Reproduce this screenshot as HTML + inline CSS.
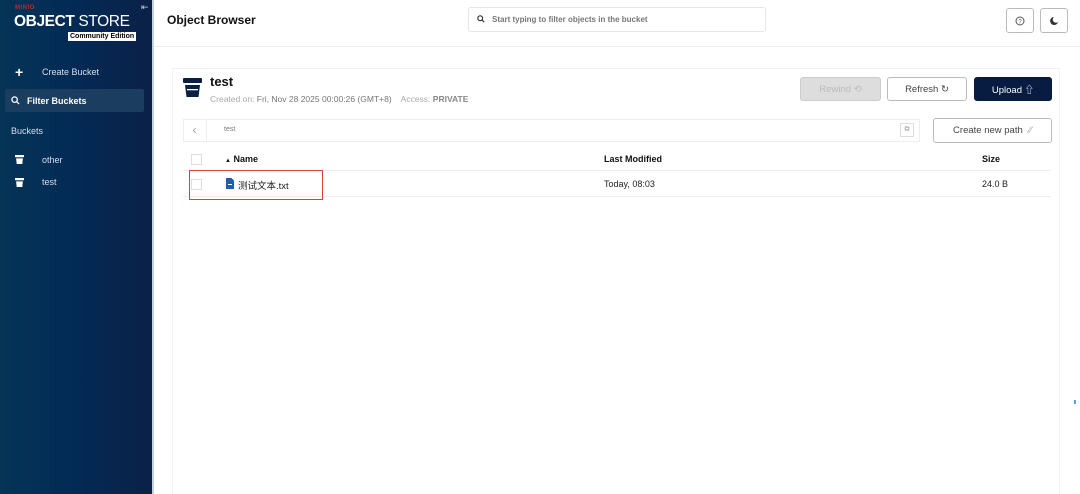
<!DOCTYPE html>
<html><head><meta charset="utf-8"><style>
*{box-sizing:border-box;margin:0;padding:0}
body{width:1080px;height:494px;overflow:hidden;font-family:"Liberation Sans","Noto Sans CJK SC",sans-serif;background:#fff;position:relative;color:#111}
.sb{position:absolute;left:0;top:0;width:154px;height:494px;background:linear-gradient(90deg,#053456 0%,#022a55 50%,#0b2147 100%);border-right:2px solid #c8d3e0;color:#fff}
.main{position:absolute;left:154px;top:0;right:0;bottom:0}
.btn{position:absolute;border:1px solid #bbb;border-radius:3px;font-size:9.5px;display:flex;align-items:center;justify-content:center;gap:6px;background:#fff;color:#444}
</style></head><body>
<div class="sb">
 <div style="position:absolute;left:15px;top:5px;font-size:6px;color:#c1272d;font-weight:bold;letter-spacing:.5px">MINIO</div>
 <div style="position:absolute;left:141px;top:2px;font-size:9px;color:#ccc">⇤</div>
 <div style="position:absolute;left:14px;top:13px;font-size:15.5px;letter-spacing:-.4px"><b>OBJECT</b> STORE</div>
 <div style="position:absolute;left:68px;top:32px;background:#fff;color:#000;font-size:7px;font-weight:bold;padding:0 2px;line-height:9px">Community Edition</div>
 <div style="position:absolute;left:15px;top:64px;font-size:14px;font-weight:bold">+</div>
 <div style="position:absolute;left:42px;top:67px;font-size:9px;color:#dde">Create Bucket</div>
 <div style="position:absolute;left:5px;top:89px;width:139px;height:23px;background:#1a3d60;border-radius:2px"></div>
 <svg style="position:absolute;left:11px;top:96px" width="9" height="9" viewBox="0 0 10 10"><circle cx="4" cy="4" r="3" fill="none" stroke="#fff" stroke-width="1.4"/><path d="M6.5 6.5L9 9" stroke="#fff" stroke-width="1.4"/></svg>
 <div style="position:absolute;left:27px;top:96px;font-size:9px;font-weight:bold">Filter Buckets</div>
 <div style="position:absolute;left:11px;top:126px;font-size:9px;color:#dde">Buckets</div>
 <svg style="position:absolute;left:15px;top:155px" width="9" height="9" viewBox="0 0 8 8"><path d="M0 0h8v2H0zM1 3h6l-.5 5h-5z" fill="#fff"/></svg>
 <div style="position:absolute;left:42px;top:155px;font-size:9px;color:#dde">other</div>
 <svg style="position:absolute;left:15px;top:178px" width="9" height="9" viewBox="0 0 8 8"><path d="M0 0h8v2H0zM1 3h6l-.5 5h-5z" fill="#fff"/></svg>
 <div style="position:absolute;left:42px;top:177px;font-size:9px;color:#dde">test</div>
</div>
<div class="main">
 <div style="position:absolute;left:13px;top:13px;font-size:12px;font-weight:bold">Object Browser</div>
 <div style="position:absolute;left:314px;top:7px;width:298px;height:25px;border:1px solid #e6e6e6;border-radius:3px"></div>
 <svg style="position:absolute;left:323px;top:15px" width="8" height="8" viewBox="0 0 10 10"><circle cx="4" cy="4" r="3" fill="none" stroke="#333" stroke-width="1.5"/><path d="M6.5 6.5L9 9" stroke="#333" stroke-width="1.5"/></svg>
 <div style="position:absolute;left:338px;top:15px;font-size:8px;color:#777;font-weight:bold">Start typing to filter objects in the bucket</div>
 <div class="btn" style="left:852px;top:8px;width:28px;height:25px"><svg width="10" height="10" viewBox="0 0 10 10"><circle cx="5" cy="5" r="4" fill="none" stroke="#555" stroke-width="1"/><text x="5" y="7.5" font-size="6" text-anchor="middle" fill="#555" font-family="Liberation Sans">?</text></svg></div>
 <div class="btn" style="left:886px;top:8px;width:28px;height:25px"><svg width="10" height="10" viewBox="0 0 10 10"><path d="M5 1a4 4 0 1 0 4 5 3 3 0 0 1-4-5z" fill="#333"/></svg></div>
 <div style="position:absolute;left:0;right:0;top:46px;border-top:1px solid #eee"></div>
 <div style="position:absolute;left:18px;top:68px;width:888px;height:426px;border:1px solid #f2f2f2;border-bottom:none"></div>
 <svg style="position:absolute;left:29px;top:78px" width="19" height="19" viewBox="0 0 19 19"><rect x="0" y="0" width="19" height="5" rx="1" fill="#0a1f44"/><path d="M2 7h15l-1.5 12h-12z" fill="#0a1f44"/><rect x="4" y="11" width="11" height="1.3" fill="#fff"/></svg>
 <div style="position:absolute;left:56px;top:74px;font-size:13px;font-weight:bold">test</div>
 <div style="position:absolute;left:56px;top:94px;font-size:8.5px;color:#aaa">Created on: <span style="color:#777">Fri, Nov 28 2025 00:00:26 (GMT+8)</span> &nbsp;&nbsp; Access: <span style="color:#888;font-weight:bold">PRIVATE</span></div>
 <div class="btn" style="left:646px;top:77px;width:81px;height:24px;background:#ddd;border-color:#ccc;color:#bbb">Rewind ⟲</div>
 <div class="btn" style="left:733px;top:77px;width:80px;height:24px">Refresh ↻</div>
 <div class="btn" style="left:820px;top:77px;width:78px;height:24px;background:#081c42;border-color:#081c42;color:#fff">Upload ⇧</div>
 <div style="position:absolute;left:29px;top:119px;width:737px;height:23px;border:1px solid #eee;background:#fff"></div>
 <div style="position:absolute;left:29px;top:119px;width:24px;height:23px;border-right:1px solid #eee;color:#999;font-size:12px;text-align:center;line-height:22px">‹</div>
 <div style="position:absolute;left:70px;top:126px;font-size:7px;color:#777">test</div>
 <div style="position:absolute;left:746px;top:123px;width:14px;height:14px;border:1px solid #ddd;font-size:7px;color:#999;text-align:center;line-height:12px">⧉</div>
 <div class="btn" style="left:779px;top:118px;width:119px;height:25px;color:#444">Create new path <span style="color:#aaa">⁄⁄</span></div>
 <div style="position:absolute;left:37px;top:154px;width:11px;height:11px;border:1px solid #ddd"></div>
 <div style="position:absolute;left:71px;top:154px;font-size:9px;font-weight:bold"><span style="font-size:6px">▲</span> Name</div>
 <div style="position:absolute;left:450px;top:154px;font-size:9px;font-weight:bold">Last Modified</div>
 <div style="position:absolute;left:828px;top:154px;font-size:9px;font-weight:bold">Size</div>
 <div style="position:absolute;left:29px;right:29px;top:170px;border-top:1px solid #eee"></div>
 <div style="position:absolute;left:29px;right:29px;top:196px;border-top:1px solid #eee"></div>
 <div style="position:absolute;left:37px;top:179px;width:11px;height:11px;border:1px solid #ddd"></div>
 <svg style="position:absolute;left:72px;top:178px" width="8" height="11" viewBox="0 0 8 11"><path d="M0 0h5.5L8 2.5V11H0z" fill="#1c5fb5"/><rect x="2" y="6" width="4" height="1" fill="#fff"/></svg>
 <div style="position:absolute;left:84px;top:178px;font-size:9.5px;color:#222">测试文本.txt</div>
 <div style="position:absolute;left:450px;top:179px;font-size:9px;color:#222">Today, 08:03</div>
 <div style="position:absolute;left:828px;top:179px;font-size:9px;color:#222">24.0 B</div>
 <div style="position:absolute;left:35px;top:170px;width:134px;height:30px;border:1.5px solid #d9413f"></div>
 <div style="position:absolute;left:920px;top:400px;width:2px;height:4px;background:#5aa0e0"></div>
</div>
</body></html>
